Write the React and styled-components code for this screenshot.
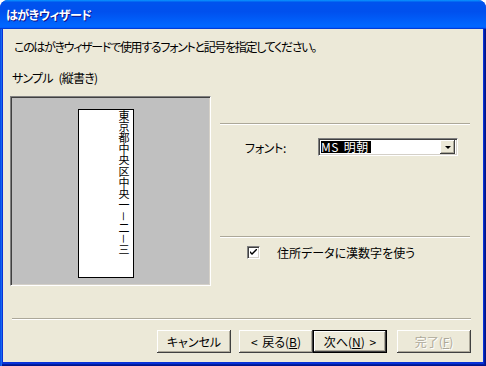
import React from 'react';
import styled, { createGlobalStyle, css } from 'styled-components';

const GlobalStyle = createGlobalStyle`
  html, body {
    margin: 0;
    padding: 0;
    background: #ffffff;
  }
  body {
    font-family: "Noto Sans CJK JP", "Noto Sans", sans-serif;
    font-size: 12px;
    color: #000000;
    font-feature-settings: "palt";
    word-spacing: 2px;
  }
`;

const Window = styled.div`
  width: 486px;
  height: 366px;
  display: flex;
  flex-direction: column;
  background: #0831d9;
  border-radius: 8px 8px 0 0;
  overflow: hidden;
`;

const TitleBar = styled.div`
  height: 29px;
  flex: none;
  display: flex;
  align-items: center;
  padding-left: 6px;
  background: linear-gradient(
    180deg,
    #0997ff,
    #0053ee 8%,
    #0050ee 40%,
    #0066ff 88%,
    #0066ff 93%,
    #005bff 95%,
    #003dd7 96%,
    #003dd7
  );
  color: #ffffff;
  font-weight: bold;
  font-size: 12px;
  letter-spacing: -0.5px;
  text-shadow: 1px 1px #0f1089;
`;

// blue side and bottom frame around the client area
const Frame = styled.div`
  flex: 1;
  display: flex;
  padding: 0 3px 4px 3px;
  background: #0831d9;
  box-shadow: inset 1px 0 #0a4ee8, inset 2px 0 #166aee, inset -1px -1px #00138c,
    inset -2px -2px #001ea0;
`;

const Body = styled.div`
  flex: 1;
  display: flex;
  flex-direction: column;
  background: #ece9d8;
  padding: 10px 12px 0 9px;
`;

const Intro = styled.div`
  line-height: 16px;
  padding-left: 2px;
  letter-spacing: -1.3px;
`;

const SampleLabel = styled.div`
  line-height: 16px;
  margin-top: 15px;
  letter-spacing: -0.8px;
  word-spacing: 4px;
`;

const Main = styled.div`
  display: flex;
  gap: 9px;
  margin-top: 10px;
  margin-left: -2px;
  height: 190px;
`;

const SamplePanel = styled.div`
  width: 201px;
  box-sizing: border-box;
  background: #c0c0c0;
  border-top: 1px solid #808080;
  border-left: 1px solid #808080;
  border-bottom: 1px solid #ffffff;
  border-right: 1px solid #ffffff;
  box-shadow: inset 1px 1px #404040, inset -1px -1px #d4d0c8;
  padding: 12px 0 0 67px;
`;

const Envelope = styled.div`
  width: 56px;
  height: 169px;
  box-sizing: border-box;
  background: #ffffff;
  border: 1px solid #000000;
  display: flex;
  justify-content: flex-end;
  padding-right: 3px;
`;

const VerticalText = styled.div`
  writing-mode: vertical-rl;
  font-size: 11px;
  line-height: 12px;
  letter-spacing: 0.2px;
  font-feature-settings: normal;
`;

const Options = styled.div`
  width: 250px;
  display: flex;
  flex-direction: column;
  padding-top: 27px;
`;

const Separator = styled.div`
  height: 2px;
  flex: none;
  border-top: 1px solid #aca899;
  border-bottom: 1px solid #ffffff;
  box-sizing: border-box;
  ${(p) => p.$gap && css`margin-top: ${p.$gap}px;`}
`;

const FontRow = styled.div`
  display: flex;
  align-items: center;
  margin-top: 13px;
  padding-left: 25px;
  height: 18px;
`;

const FieldLabel = styled.span`
  width: 73px;
  flex: none;
  letter-spacing: -0.3px;
`;

const Combo = styled.div`
  width: 140px;
  height: 18px;
  box-sizing: border-box;
  display: flex;
  align-items: center;
  justify-content: space-between;
  background: #ffffff;
  border-top: 1px solid #808080;
  border-left: 1px solid #808080;
  border-bottom: 1px solid #ffffff;
  border-right: 1px solid #ffffff;
  box-shadow: inset 1px 1px #404040, inset -1px -1px #d4d0c8;
  padding: 2px;
`;

const Selected = styled.span`
  background: #000000;
  color: #ffffff;
  line-height: 12px;
  height: 12px;
  padding-right: 2px;
  letter-spacing: 0.4px;
`;

const DropButton = styled.div`
  width: 15px;
  height: 14px;
  box-sizing: border-box;
  background: #ece9d8;
  box-shadow: inset -1px -1px #404040, inset 1px 1px #ffffff, inset -2px -2px #aca899;
  display: flex;
  align-items: center;
  justify-content: center;
`;

const Arrow = styled.div`
  width: 0;
  height: 0;
  border-left: 3px solid transparent;
  border-right: 3px solid transparent;
  border-top: 3px solid #000000;
  margin-top: 1px;
`;

const CheckRow = styled.div`
  display: flex;
  align-items: center;
  height: 20px;
  margin-top: 4px;
  padding-left: 27px;
  gap: 17px;
`;

const CheckBox = styled.div`
  width: 13px;
  height: 13px;
  box-sizing: border-box;
  background: #ffffff;
  border-top: 1px solid #808080;
  border-left: 1px solid #808080;
  border-bottom: 1px solid #ffffff;
  border-right: 1px solid #ffffff;
  box-shadow: inset 1px 1px #404040, inset -1px -1px #d4d0c8;
  display: flex;
  align-items: center;
  justify-content: center;
`;

const BottomSeparator = styled(Separator)`
  margin-top: 32px;
`;

const ButtonRow = styled.div`
  display: flex;
  justify-content: flex-end;
  margin-top: 10px;
`;

const Button = styled.div`
  width: 74px;
  height: 23px;
  box-sizing: border-box;
  display: flex;
  align-items: center;
  justify-content: center;
  white-space: pre;
  background: #ece9d8;
  margin-left: ${(p) => p.$gap || 0}px;
  box-shadow: inset -1px -1px #404040, inset 1px 1px #ffffff, inset -2px -2px #aca899;
  color: ${(p) => (p.$disabled ? '#aca899' : '#000000')};
  text-shadow: ${(p) => (p.$disabled ? '1px 1px #ffffff' : 'none')};
  ${(p) =>
    p.$default &&
    css`
      border: 1px solid #000000;
    `}
  u {
    text-underline-offset: 1px;
  }
`;

export default function App() {
  return (
    <>
      <GlobalStyle />
      <Window>
        <TitleBar>はがきウィザード</TitleBar>
        <Frame>
          <Body>
            <Intro>このはがきウィザードで使用するフォントと記号を指定してください。</Intro>
            <SampleLabel>サンプル (縦書き)</SampleLabel>
            <Main>
              <SamplePanel>
                <Envelope>
                  <VerticalText>東京都中央区中央一－二－三</VerticalText>
                </Envelope>
              </SamplePanel>
              <Options>
                <Separator />
                <FontRow>
                  <FieldLabel>フォント:</FieldLabel>
                  <Combo>
                    <Selected>MS 明朝</Selected>
                    <DropButton>
                      <Arrow />
                    </DropButton>
                  </Combo>
                </FontRow>
                <Separator $gap={80} />
                <CheckRow>
                  <CheckBox>
                    <svg width="7" height="7" viewBox="0 0 7 7">
                      <path d="M0 2 L0 4 L2 6 L7 1 L7 -1 L2 4 Z" fill="#000" />
                    </svg>
                  </CheckBox>
                  <span>住所データに漢数字を使う</span>
                </CheckRow>
              </Options>
            </Main>
            <BottomSeparator />
            <ButtonRow>
              <Button>キャンセル</Button>
              <Button $gap={8}>&lt; 戻る(<u>B</u>)</Button>
              <Button $default>次へ(<u>N</u>) &gt;</Button>
              <Button $gap={10} $disabled>完了(<u>F</u>)</Button>
            </ButtonRow>
          </Body>
        </Frame>
      </Window>
    </>
  );
}
